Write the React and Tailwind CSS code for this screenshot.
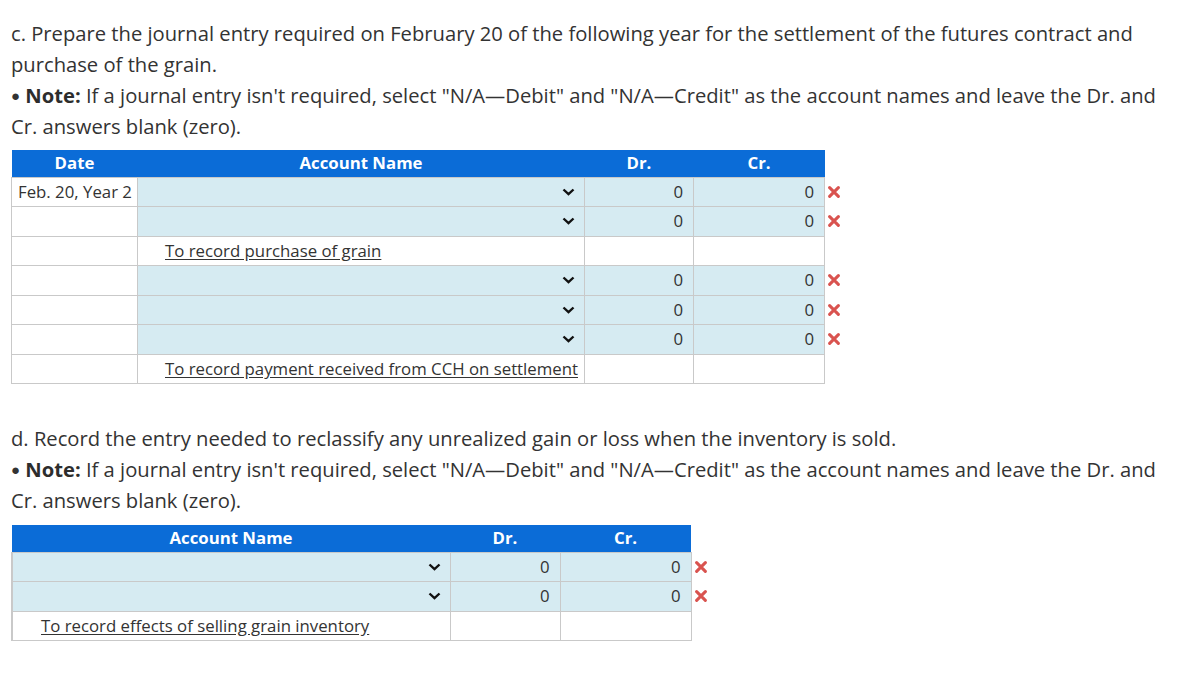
import React from 'react';

const Chevron = () => (
  <svg width="13" height="8" viewBox="0 0 13 8" className="shrink-0">
    <polyline points="1.5,1.5 6.5,6.2 11.5,1.5" fill="none" stroke="#111" strokeWidth="2.4" />
  </svg>
);

const Cross = () => (
  <svg width="12" height="12" viewBox="0 0 11 11">
    <path d="M1.5 1.5 L9.5 9.5 M9.5 1.5 L1.5 9.5" stroke="#d9534f" strokeWidth="2.8" strokeLinecap="round" />
  </svg>
);

const cell = 'border border-[#c9c9c9] h-[29.5px] p-0';
const blue = 'bg-[#d6ebf2]';

const SelectCell = () => (
  <td className={`${cell} ${blue}`}>
    <div className="flex justify-end items-center pr-[9px]">
      <Chevron />
    </div>
  </td>
);

const NumCell = () => (
  <td className={`${cell} ${blue} text-right pr-[10px]`}>0</td>
);

const MarkCell = () => (
  <td className="p-0 pl-[3px] align-middle">
    <Cross />
  </td>
);

const Head = ({ children, w }) => (
  <th className={`bg-[#0b6cd7] text-white font-bold h-[27px] p-0 text-center ${w}`}>{children}</th>
);

const Note = () => (
  <p>
    <span className="text-[15px] align-[2px]">●</span> <b className="font-bold text-[#2d2d2d]">Note:</b> If a journal entry isn't required, select "N/A—Debit" and "N/A—Credit" as the account names and leave the Dr. and Cr. answers blank (zero).
  </p>
);

const EntryRow = ({ date }) => (
  <tr>
    <td className={`${cell} bg-white pl-[6px]`}>{date}</td>
    <SelectCell />
    <NumCell />
    <NumCell />
    <MarkCell />
  </tr>
);

const DescRow = ({ text, withDate = true }) => (
  <tr>
    {withDate && <td className={`${cell} bg-white`}></td>}
    <td className={`${cell} bg-white ${withDate ? 'pl-[27px]' : 'pl-[28px]'}`}>
      <span className="underline underline-offset-2">{text}</span>
    </td>
    <td className={`${cell} bg-white`}></td>
    <td className={`${cell} bg-white`}></td>
    <td className="p-0"></td>
  </tr>
);

const SimpleRow = () => (
  <tr>
    <SelectCell />
    <NumCell />
    <NumCell />
    <MarkCell />
  </tr>
);

export default function App() {
  return (
    <div className="bg-white min-h-screen px-[11px] pt-[18px] text-[#333] text-[20.2px] leading-[31px] font-['Open_Sans','Noto_Sans',sans-serif]">
      <p>
        c. Prepare the journal entry required on February 20 of the following year for the settlement of the futures contract and purchase of the grain.
      </p>
      <Note />

      <table className="border-collapse mt-[8px] table-fixed w-[837px] text-[16.8px] leading-[20px]">
        <thead>
          <tr>
            <Head w="w-[126px]">Date</Head>
            <Head w="w-[447px]">Account Name</Head>
            <Head w="w-[109px]">Dr.</Head>
            <Head w="w-[131px]">Cr.</Head>
            <th className="p-0 w-[24px]"></th>
          </tr>
        </thead>
        <tbody>
          <EntryRow date="Feb. 20, Year 2" />
          <EntryRow date="" />
          <DescRow text="To record purchase of grain" />
          <EntryRow date="" />
          <EntryRow date="" />
          <EntryRow date="" />
          <DescRow text="To record payment received from CCH on settlement" />
        </tbody>
      </table>

      <p className="mt-[39px]">
        d. Record the entry needed to reclassify any unrealized gain or loss when the inventory is sold.
      </p>
      <Note />

      <table className="border-collapse mt-[9px] table-fixed w-[703px] text-[16.8px] leading-[20px]">
        <thead>
          <tr>
            <Head w="w-[438px]">Account Name</Head>
            <Head w="w-[110px]">Dr.</Head>
            <Head w="w-[131px]">Cr.</Head>
            <th className="p-0 w-[24px]"></th>
          </tr>
        </thead>
        <tbody className="[&_tr>td:first-child]:border-l-2">
          <SimpleRow />
          <SimpleRow />
          <DescRow text="To record effects of selling grain inventory" withDate={false} />
        </tbody>
      </table>
    </div>
  );
}
